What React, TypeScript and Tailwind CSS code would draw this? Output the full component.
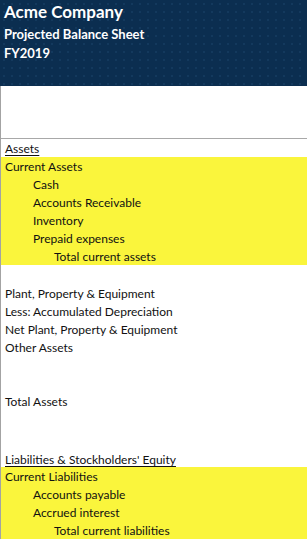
const font = { fontFamily: "Lato, 'Open Sans', sans-serif" };

type Row = { text?: string; indent?: 0 | 1 | 2; underline?: boolean };

function Line({ text, indent = 0, underline }: Row) {
  const pad = indent === 2 ? "pl-[53px]" : indent === 1 ? "pl-[32px]" : "pl-[4px]";
  return (
    <div className={`h-[18px] flex items-center pt-[2px] ${pad} text-[12px] text-[#111] leading-none`}>
      {text && <span className={underline ? "underline underline-offset-2" : ""}>{text}</span>}
    </div>
  );
}

export default function App() {
  return (
    <div className="w-[307px] h-[542px] overflow-hidden bg-white" style={font}>
      <div className="h-[86px] bg-[#0b2e50] bg-[radial-gradient(circle,#13395d_0.8px,transparent_1px)] bg-[length:8px_8px] px-[4px] pt-[1px] text-white font-bold">
        <div className="text-[17px] leading-[22px]">Acme Company</div>
        <div className="text-[13px] leading-[19px] mt-[2px]">Projected Balance Sheet</div>
        <div className="text-[13px] leading-[19px]">FY2019</div>
      </div>
      <div className="border-l border-[#a3a3a3]">
        <div className="h-[53px] border-b border-[#a8a8a8]" />
        <Line text="Assets" underline />
        <div className="bg-[#faf53c]">
          <Line text="Current Assets" />
          <Line text="Cash" indent={1} />
          <Line text="Accounts Receivable" indent={1} />
          <Line text="Inventory" indent={1} />
          <Line text="Prepaid expenses" indent={1} />
          <Line text="Total current assets" indent={2} />
        </div>
        <div className="h-[19px]" />
        <Line text="Plant, Property & Equipment" />
        <Line text="Less: Accumulated Depreciation" />
        <Line text="Net Plant, Property & Equipment" />
        <Line text="Other Assets" />
        <Line />
        <Line />
        <Line text="Total Assets" />
        <Line />
        <Line />
        <div className="h-[21px] flex items-end pb-[1px] pl-[4px] text-[12px] text-[#111] leading-none">
          <span className="underline underline-offset-2">Liabilities &amp; Stockholders' Equity</span>
        </div>
        <div className="bg-[#faf53c]">
          <Line text="Current Liabilities" />
          <Line text="Accounts payable" indent={1} />
          <Line text="Accrued interest" indent={1} />
          <Line text="Total current liabilities" indent={2} />
        </div>
      </div>
    </div>
  );
}
